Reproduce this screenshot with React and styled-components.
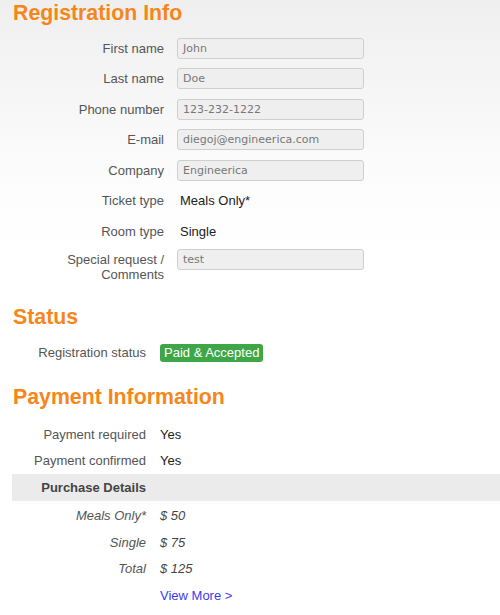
import React from 'react';
import styled, { createGlobalStyle } from 'styled-components';

const GlobalStyle = createGlobalStyle`
  html, body {
    margin: 0;
    padding: 0;
  }
  body {
    background: #fff linear-gradient(#efefef 0, #fdfdfd 190px, #fff 260px) no-repeat;
    font-family: "Liberation Sans", Arial, sans-serif;
    font-size: 13px;
    color: #555;
  }
`

const Page = styled.div`
  width: 500px;
  min-height: 615px;
  padding-left: 12px;
  box-sizing: border-box;
`

const Heading = styled.h2`
  margin: ${p => p.$top}px 0 0 1px;
  font-size: 21.3px;
  line-height: 24px;
  font-weight: bold;
  color: #f6861a;
`

const Form = styled.div`
  display: grid;
  grid-template-columns: ${p => p.$label}px 1fr;
  column-gap: ${p => p.$gap}px;
  margin-top: ${p => p.$top}px;
`

const Row = styled.div`
  display: contents;
`

const Label = styled.div`
  height: ${p => p.$h}px;
  display: flex;
  align-items: ${p => (p.$multi ? 'flex-start' : 'center')};
  justify-content: flex-end;
  text-align: right;
  line-height: 15px;
  padding-top: ${p => (p.$multi ? 5 : 0)}px;
  box-sizing: border-box;
  font-style: ${p => (p.$italic ? 'italic' : 'normal')};
`

const Cell = styled.div`
  height: ${p => p.$h}px;
  display: flex;
  align-items: ${p => (p.$multi ? 'flex-start' : 'center')};
  padding-top: ${p => (p.$multi ? 2.5 : 0)}px;
  padding-left: ${p => p.$indent || 0}px;
  box-sizing: border-box;
  color: ${p => (p.$italic ? '#444' : '#222')};
  font-style: ${p => (p.$italic ? 'italic' : 'normal')};
`

const Field = styled.div`
  width: 187px;
  height: 21px;
  box-sizing: border-box;
  border: 1px solid #cfcfcf;
  border-radius: 3px;
  background: #efefef;
  padding: 0 5px;
  display: flex;
  align-items: center;
  font-family: "DejaVu Sans", Verdana, sans-serif;
  font-size: 11px;
  font-style: normal;
  color: #777;
`

const Badge = styled.span`
  display: inline-block;
  background: #3ea646;
  color: #fff;
  border-radius: 3px;
  padding: 1px 4px 2px;
  line-height: 15px;
`

const Band = styled.div`
  display: grid;
  grid-template-columns: 134px 1fr;
  height: 27px;
  align-items: center;
  background: #ebebeb;
  font-weight: bold;
  color: #444;
  text-align: right;
`

const Link = styled.a`
  color: #3b3bf0;
  text-decoration: none;
  cursor: pointer;
`

const regFields = [
  ['First name', 'John'],
  ['Last name', 'Doe'],
  ['Phone number', '123-232-1222'],
  ['E-mail', 'diegoj@engineerica.com'],
  ['Company', 'Engineerica'],
]

const details = [
  ['Meals Only*', '$ 50'],
  ['Single', '$ 75'],
  ['Total', '$ 125'],
]

const App = () => {
  return (
    <>
      <GlobalStyle />
      <Page>
        <Heading $top={1}>Registration Info</Heading>
        <Form $label={152} $gap={13} $top={8}>
          {regFields.map(([label, value]) => (
            <Row key={label}>
              <Label $h={30.5}>{label}</Label>
              <Cell $h={30.5}><Field>{value}</Field></Cell>
            </Row>
          ))}
          <Label $h={30.5}>Ticket type</Label>
          <Cell $h={30.5} $indent={3}>Meals Only*</Cell>
          <Label $h={30.5}>Room type</Label>
          <Cell $h={30.5} $indent={3}>Single</Cell>
          <Label $h={36} $multi>Special request /<br />Comments</Label>
          <Cell $h={36} $multi><Field>test</Field></Cell>
        </Form>

        <Heading $top={22}>Status</Heading>
        <Form $label={134} $gap={14} $top={11}>
          <Label $h={26}>Registration status</Label>
          <Cell $h={26}><Badge>Paid &amp; Accepted</Badge></Cell>
        </Form>

        <Heading $top={19}>Payment Information</Heading>
        <Form $label={134} $gap={14} $top={13}>
          <Label $h={26}>Payment required</Label>
          <Cell $h={26}>Yes</Cell>
          <Label $h={26}>Payment confirmed</Label>
          <Cell $h={26}>Yes</Cell>
        </Form>
        <Band><span>Purchase Details</span></Band>
        <Form $label={134} $gap={14} $top={2}>
          {details.map(([label, value]) => (
            <Row key={label}>
              <Label $h={26.5} $italic>{label}</Label>
              <Cell $h={26.5} $italic>{value}</Cell>
            </Row>
          ))}
          <span />
          <Cell $h={26.5}><Link>View More &gt;</Link></Cell>
        </Form>
      </Page>
    </>
  )
}

export default App;
